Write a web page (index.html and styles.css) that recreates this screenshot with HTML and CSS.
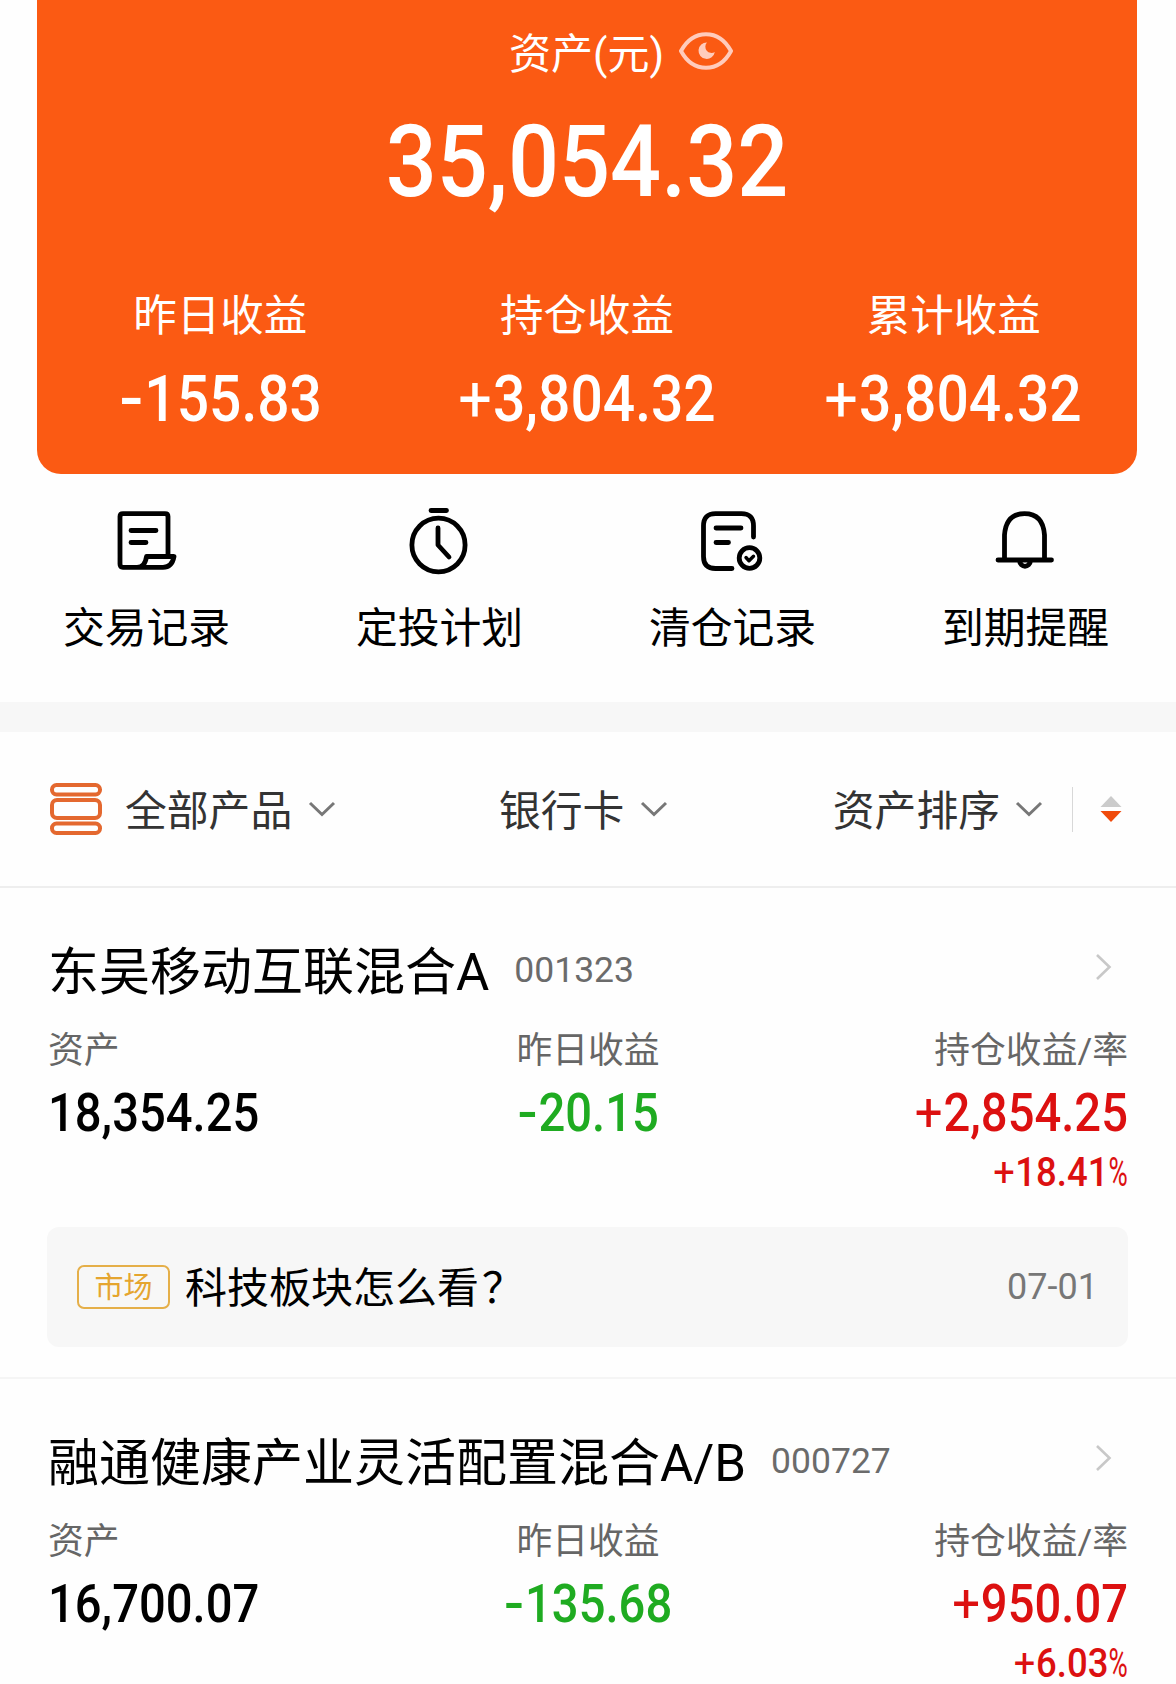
FILE: index.html
```html
<!DOCTYPE html>
<html lang="zh-CN">
<head>
    <meta charset="UTF-8">
    <meta name="viewport" content="width=device-width, initial-scale=1.0">
    <title>我的资产</title>
    <link rel="stylesheet" href="styles.css">
</head>
<body>
  <div class="page">

    <!-- Total assets -->
    <section class="summary">
      <div class="summary-title">
        <span>资产(元)</span>
        <svg class="eye" viewBox="0 0 54 38" fill="none">
          <path d="M2 19C8 8 17 2.2 27 2.2S46 8 52 19C46 30 37 35.8 27 35.8S8 30 2 19Z" stroke="#ffcbbc" stroke-width="4" stroke-linejoin="round"/>
          <path d="M28 10.500A8.200 8.200 0 1 0 35.800 20A6.200 6.200 0 0 1 28 10.500Z" fill="#ffcbbc"/>
        </svg>
      </div>
      <div class="total num">35,054.32</div>
      <div class="profits">
        <div class="profit">
          <div class="profit-label">昨日收益</div>
          <div class="profit-value num"><span class="minus">-</span>155.83</div>
        </div>
        <div class="profit">
          <div class="profit-label">持仓收益</div>
          <div class="profit-value num"><span class="plus">+</span>3,804.32</div>
        </div>
        <div class="profit">
          <div class="profit-label">累计收益</div>
          <div class="profit-value num"><span class="plus">+</span>3,804.32</div>
        </div>
      </div>
    </section>

    <!-- Shortcuts -->
    <nav class="menu">
      <a class="menu-item">
        <svg class="menu-icon" viewBox="0 0 68 68">
          <path d="M55 47V8.500Q55 5.700 52 5.700H10Q7 5.700 7 8.500V56Q7 59.300 10 59.300H50Q59 59.300 61 48.500H33.500Q32 59.300 24 59.300"/>
          <path d="M18 22.500H43M18 34.500H33"/>
        </svg>
        <span>交易记录</span>
      </a>
      <a class="menu-item">
        <svg class="menu-icon" viewBox="0 0 68 68">
          <ellipse cx="32.500" cy="37" rx="26.600" ry="26.800"/>
          <path d="M25 2.500H40.500M32 20V37L43 49"/>
        </svg>
        <span>定投计划</span>
      </a>
      <a class="menu-item">
        <svg class="menu-icon" viewBox="0 0 68 68">
          <path d="M54.500 29V18Q54.500 5.700 42.500 5.700H16.500Q4.500 5.700 4.500 18V48.500Q4.500 60.500 16.500 60.500H33"/>
          <path d="M17 20H42M17 34.500H29.500"/>
          <circle cx="50.500" cy="50" r="10.300"/>
          <path class="thin" d="M47 49.500L50 52.800L54.500 48.300"/>
        </svg>
        <span>清仓记录</span>
      </a>
      <a class="menu-item">
        <svg class="menu-icon" viewBox="0 0 68 68">
          <path d="M12.500 51V27Q14 5.700 32.500 5.700Q51 5.700 52.500 27V51"/>
          <path d="M6 52H59.500M27.500 53A5.600 6.500 0 0 0 38.500 53"/>
        </svg>
        <span>到期提醒</span>
      </a>
    </nav>

    <!-- Filter bar -->
    <div class="filter-bar">
      <div class="filter filter-product">
        <svg class="list-icon" viewBox="0 0 52 52">
          <rect x="2" y="2" width="48" height="9.500" rx="4.500"/>
          <rect x="2" y="17" width="48" height="18" rx="5"/>
          <rect x="2" y="40.500" width="48" height="9.500" rx="4.500"/>
        </svg>
        <span>全部产品</span>
        <svg class="chevron" viewBox="0 0 28 16"><path d="M2 2L14 13.500L26 2"/></svg>
      </div>
      <div class="filter filter-card">
        <span>银行卡</span>
        <svg class="chevron" viewBox="0 0 28 16"><path d="M2 2L14 13.500L26 2"/></svg>
      </div>
      <div class="filter filter-sort">
        <span>资产排序</span>
        <svg class="chevron" viewBox="0 0 28 16"><path d="M2 2L14 13.500L26 2"/></svg>
        <i class="divider"></i>
        <svg class="sort-icon" viewBox="0 0 22 26">
          <path d="M11 0L21.500 11H0.500Z" fill="#cbcbcb"/>
          <path d="M0.500 15H21.500L11 26Z" fill="#f04b0c"/>
        </svg>
      </div>
    </div>

    <!-- Funds -->
    <section class="fund">
      <div class="fund-head">
        <span class="fund-name">东吴移动互联混合A</span>
        <span class="fund-code">001323</span>
        <svg class="arrow" viewBox="0 0 17 28"><path d="M2 2L14.500 14L2 26"/></svg>
      </div>
      <div class="fund-data">
        <div class="col">
          <div class="label">资产</div>
          <div class="value num">18,354.25</div>
        </div>
        <div class="col center">
          <div class="label">昨日收益</div>
          <div class="value num green"><span class="minus">-</span>20.15</div>
        </div>
        <div class="col right">
          <div class="label">持仓收益/率</div>
          <div class="value num red"><span class="plus">+</span>2,854.25</div>
          <div class="rate num red"><span class="plus">+</span>18.41<span class="percent">%</span></div>
        </div>
      </div>
      <div class="news">
        <span class="tag">市场</span>
        <span class="news-title">科技板块怎么看<span class="mark">？</span></span>
        <span class="news-date">07-01</span>
      </div>
    </section>

    <section class="fund">
      <div class="fund-head">
        <span class="fund-name">融通健康产业灵活配置混合A/B</span>
        <span class="fund-code">000727</span>
        <svg class="arrow" viewBox="0 0 17 28"><path d="M2 2L14.500 14L2 26"/></svg>
      </div>
      <div class="fund-data">
        <div class="col">
          <div class="label">资产</div>
          <div class="value num">16,700.07</div>
        </div>
        <div class="col center">
          <div class="label">昨日收益</div>
          <div class="value num green"><span class="minus">-</span>135.68</div>
        </div>
        <div class="col right">
          <div class="label">持仓收益/率</div>
          <div class="value num red"><span class="plus">+</span>950.07</div>
          <div class="rate num red"><span class="plus">+</span>6.03<span class="percent">%</span></div>
        </div>
      </div>
    </section>

  </div>
</body>
</html>
```
FILE: styles.css
```css
*{
    box-sizing: border-box;
}

body{
    margin: 0;
    background: #fefefe;
    color: #000;
    font-family: Roboto, "Noto Sans CJK SC", sans-serif;
}

.page{
    width: 1176px;
    height: 1684px;
    overflow: hidden;
}

svg{
    display: block;
    flex: none;
}

/* narrow digits */
.num{
    font-weight: 500;
    transform: scaleX(0.89);
}

.plus{
    display: inline-block;
    margin-right: 0.03em;
    font-weight: 400;
    transform: scaleX(1.04);
}

.minus{
    display: inline-block;
    width: 0.36em;
    margin-right: 0.09em;
    transform: scaleX(1.25);
    transform-origin: left;
}

/* summary card */
.summary{
    width: 1100px;
    height: 474px;
    margin-left: 37px;
    padding-top: 20px;
    background: #fb5a13;
    border-radius: 0 0 24px 24px;
    color: #fff;
    text-align: center;
}

.summary-title{
    display: flex;
    align-items: center;
    justify-content: center;
    gap: 15px;
    height: 62px;
    padding-left: 68px;
    font-size: 42px;
}

.summary-title span{
    padding-bottom: 2px;
}

.eye{
    width: 54px;
    height: 38px;
}

.total{
    height: 120px;
    margin-top: 20px;
    font-size: 101px;
    line-height: 120px;
}

.profits{
    display: grid;
    grid-template-columns: repeat(3, 1fr);
    margin-top: 65px;
}

.profit-label{
    font-size: 43.5px;
    line-height: 60px;
}

.profit-value{
    margin-top: 15px;
    font-size: 64px;
    line-height: 76px;
}

/* shortcuts */
.menu{
    display: grid;
    grid-template-columns: repeat(4, 293px);
    height: 228px;
    padding-top: 34px;
}

.menu-item{
    display: flex;
    flex-direction: column;
    align-items: center;
    font-size: 41.8px;
    line-height: 60px;
}

.menu-icon{
    width: 68px;
    height: 68px;
    margin-bottom: 23px;
    fill: none;
    stroke: #000;
    stroke-width: 4.8;
    stroke-linecap: round;
    stroke-linejoin: round;
}

.menu-icon .thin{
    stroke-width: 3.4;
}

/* filter bar */
.filter-bar{
    display: flex;
    height: 186px;
    padding: 0 54px 0 50px;
    border-top: 30px solid #f7f7f7;
    border-bottom: 2px solid #eee;
    color: #333;
    font-size: 41.8px;
}

.filter{
    display: flex;
    align-items: center;
    gap: 16px;
}

.filter span{
    padding-bottom: 3px;
}

.filter-product{
    width: 449px;
}

.filter-sort{
    gap: 15px;
    margin-left: auto;
}

.list-icon{
    width: 52px;
    height: 52px;
    margin-right: 7px;
    fill: none;
    stroke: #e4682f;
    stroke-width: 4;
}

.chevron{
    width: 28px;
    height: 16px;
    fill: none;
    stroke: #777;
    stroke-width: 3;
}

.divider{
    width: 1px;
    height: 45px;
    margin: 0 12px 0 14px;
    background: #d8d8d8;
}

.sort-icon{
    width: 22px;
    height: 26px;
    margin-bottom: 1px;
}

/* fund list */
.fund{
    height: 491px;
    padding: 46px 48px 0;
    border-bottom: 2px solid #f5f5f5;
}

.fund-head{
    display: flex;
    align-items: center;
    height: 72px;
}

.fund-name{
    padding-bottom: 5px;
    font-size: 51px;
}

.fund-code{
    margin-left: 25px;
    color: #6b6b6b;
    font-size: 35.5px;
}

.arrow{
    width: 17px;
    height: 28px;
    margin: 0 16px 6px auto;
    fill: none;
    stroke: #c8c8c8;
    stroke-width: 2.6;
}

.fund-data{
    display: grid;
    grid-template-columns: repeat(3, 1fr);
    height: 221px;
    padding-top: 20px;
}

.fund-data .num{
    transform-origin: left;
}

.fund-data .center .num{
    transform-origin: center;
}

.fund-data .right .num{
    transform-origin: right;
}

.center{
    text-align: center;
}

.right{
    text-align: right;
}

.label{
    color: #666;
    font-size: 35.8px;
    line-height: 50px;
}

.value{
    margin-top: 5px;
    font-size: 53px;
    line-height: 64px;
}

.rate{
    margin-top: 6px;
    font-size: 41px;
    line-height: 42px;
}

.percent{
    display: inline-block;
    width: 22px;
    font-weight: 400;
    transform: scaleX(0.72);
    transform-origin: left;
}

.green{
    color: #1fab21;
}

.red{
    color: #dc1010;
}

.news{
    display: flex;
    align-items: center;
    height: 120px;
    margin: 0 0 0 -1px;
    padding: 0 30px;
    background: #f7f7f7;
    border-radius: 12px;
}

.tag{
    width: 93px;
    height: 44px;
    border: 2px solid #e5af49;
    border-radius: 7px;
    color: #e5a52f;
    font-size: 29px;
    line-height: 42px;
    text-align: center;
}

.news-title{
    margin-left: 15px;
    padding-bottom: 6px;
    font-size: 42px;
}

.mark{
    margin-left: 3px;
}

.news-date{
    margin-left: auto;
    color: #777;
    font-size: 36px;
}
```
